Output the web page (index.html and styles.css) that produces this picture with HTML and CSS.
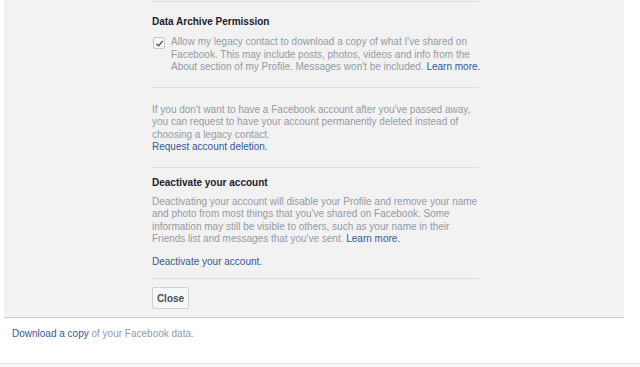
FILE: index.html
```html
<!DOCTYPE html>
<html>
<head>
<meta charset="utf-8">
<link rel="stylesheet" href="styles.css">
</head>
<body>
<div class="panel">
  <div class="col">
    <div class="sec sec1">
      <div class="heading">Data Archive Permission</div>
      <div class="checkrow">
        <span class="checkbox"><svg width="9" height="9" viewBox="0 0 9 9"><path d="M1.5 4.8 L3.6 6.8 L7.6 2" fill="none" stroke="#4b4f56" stroke-width="1.3"/></svg></span>
        <div class="text">Allow my legacy contact to download a copy of what I've shared on<br>Facebook. This may include posts, photos, videos and info from the<br>About section of my Profile. Messages won't be included. <a class="link">Learn more.</a></div>
      </div>
    </div>
    <div class="sec sec2">
      <div class="text">If you don't want to have a Facebook account after you've passed away,<br>you can request to have your account permanently deleted instead of<br>choosing a legacy contact.<br><a class="link">Request account deletion.</a></div>
    </div>
    <div class="sec sec3">
      <div class="heading">Deactivate your account</div>
      <div class="text para">Deactivating your account will disable your Profile and remove your name<br>and photo from most things that you've shared on Facebook. Some<br>information may still be visible to others, such as your name in their<br>Friends list and messages that you've sent. <a class="link">Learn more.</a></div>
      <div class="text"><a class="link">Deactivate your account.</a></div>
    </div>
    <div class="sec footer">
      <button class="btn">Close</button>
    </div>
  </div>
</div>
<div class="download"><a class="link">Download a copy</a> of your Facebook data.</div>
<div class="bottom"></div>
</body>
</html>
```
FILE: styles.css
```css
html, body {
  margin: 0;
  padding: 0;
  background: #fff;
  font-family: "Liberation Sans", Arial, sans-serif;
  font-size: 10px;
  overflow: hidden;
}
.panel {
  margin-left: 4px;
  width: 620px;
  background: #f2f2f2;
  border-bottom: 1px solid #c9c9c9;
  padding-top: 1px;
}
.col {
  margin-left: 148px;
  width: 327px;
}
.sec {
  border-top: 1px solid #dcdcdc;
}
.heading {
  font-weight: bold;
  color: #1d2129;
  font-size: 10px;
  line-height: 13px;
}
.text {
  color: #959aa3;
  line-height: 12.5px;
  white-space: nowrap;
}
.link {
  color: #365899;
  text-decoration: none;
}
.sec1 {
  padding: 13px 0 13px;
}
.checkrow {
  display: flex;
  gap: 6px;
  margin-top: 8px;
}
.checkbox {
  flex: none;
  width: 10px;
  height: 10px;
  border: 1px solid #c4c7cc;
  border-radius: 2px;
  background: #fafafa;
  margin-top: 1px;
  margin-left: 1px;
  display: flex;
  align-items: center;
  justify-content: center;
}
.sec2 {
  padding: 16px 0 13px;
}
.sec3 {
  padding: 8px 0 10px;
}
.para {
  margin-top: 7px;
  margin-bottom: 10px;
}
.footer {
  padding: 8px 0 8px;
}
.btn {
  display: block;
  height: 22px;
  width: 37px;
  padding: 0;
  font-family: "Liberation Sans", Arial, sans-serif;
  font-size: 10px;
  font-weight: bold;
  color: #4b4f56;
  background: #f6f7f9;
  border: 1px solid #ced0d4;
  border-radius: 2px;
}
.download {
  padding: 10px 0 0 12px;
  color: #959aa3;
  line-height: 12.5px;
  height: 35px;
}
.bottom {
  border-top: 1px solid #e5e5e5;
  background: #f7f7f7;
  height: 10px;
}
```
